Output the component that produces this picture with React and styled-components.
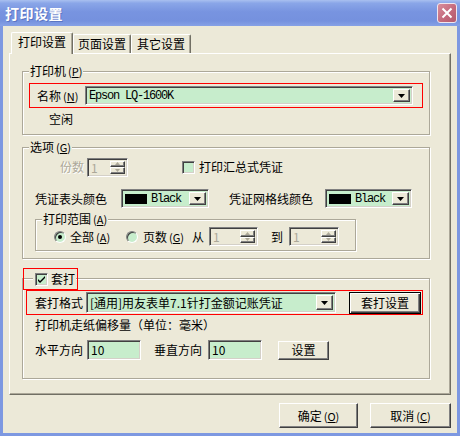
import React from "react";
import styled, { createGlobalStyle } from "styled-components";

const GlobalStyle = createGlobalStyle`
  html, body { margin: 0; padding: 0; background: #ece9d8; }
  body {
    font-family: "Noto Sans CJK SC", "Liberation Sans", sans-serif;
    font-size: 12px;
    color: #000;
  }
`;

const Window = styled.div`
  width: 460px;
  height: 436px;
  box-sizing: border-box;
  display: flex;
  flex-direction: column;
  background: #7d98e1;
`;

const TitleBar = styled.div`
  height: 26px;
  flex: none;
  display: flex;
  align-items: center;
  justify-content: space-between;
  padding: 0 3px 0 5px;
  background: linear-gradient(#a9c0f0 0%, #8aa6e8 12%, #7894e0 45%, #7591de 80%, #86a1e6 100%);
  color: #fff;
  font-weight: bold;
  font-size: 14px;
  letter-spacing: 0.5px;
  text-shadow: 1px 1px 0 rgba(40, 60, 140, 0.35);
`;

const CloseButton = styled.div`
  width: 20px;
  height: 20px;
  box-sizing: border-box;
  border: 1px solid #f0e6ee;
  border-radius: 3px;
  background: linear-gradient(135deg, #d98e9c, #c2677a 60%, #b45a6e);
  display: flex;
  align-items: center;
  justify-content: center;
`;

const Client = styled.div`
  flex: 1;
  margin: 0 3px 3px;
  background: #ece9d8;
  padding: 6px 6px 0;
  display: flex;
  flex-direction: column;
`;

const TabRow = styled.div`
  display: flex;
  align-items: flex-end;
  height: 21px;
  padding-left: 2px;
  position: relative;
  z-index: 1;
`;

const Tab = styled.div`
  box-sizing: border-box;
  width: ${p => p.$w}px;
  height: ${p => (p.$active ? 22 : 19)}px;
  margin-bottom: ${p => (p.$active ? -1 : 0)}px;
  background: #ece9d8;
  border-left: 1px solid #fff;
  border-top: 1px solid #fff;
  border-right: 1px solid #716f64;
  box-shadow: inset -1px 0 0 #aca899;
  border-radius: 2px 2px 0 0;
  display: flex;
  align-items: center;
  justify-content: center;
  line-height: 14px;
  padding-bottom: ${p => (p.$active ? 3 : 0)}px;
`;

const Panel = styled.div`
  box-sizing: border-box;
  height: 342px;
  border: 1px solid;
  border-color: #fff #716f64 #716f64 #fff;
  box-shadow: inset -1px -1px 0 #aca899;
  padding-left: 12px;
  display: flex;
  flex-direction: column;
`;

const Group = styled.div`
  position: relative;
  box-sizing: border-box;
  width: ${p => p.$w || 408}px;
  height: ${p => p.$h}px;
  margin-top: ${p => p.$mt}px;
  margin-left: ${p => p.$ml || 0}px;
  border: 1px solid #aca899;
  box-shadow: inset 1px 1px 0 #fff, 1px 1px 0 #fff;
  display: flex;
  flex-direction: column;
  flex: none;
`;

const Legend = styled.div`
  position: absolute;
  top: -8px;
  left: 6px;
  padding: 0 1px;
  background: #ece9d8;
  line-height: 14px;
  white-space: nowrap;
`;

const CheckLegend = styled.div`
  position: absolute;
  top: -11px;
  left: 0;
  box-sizing: border-box;
  width: 55px;
  height: 22px;
  border: 1px solid #f00;
  display: flex;
  align-items: center;
`;

const LegendFill = styled.div`
  margin-left: 9px;
  padding: 0 1px 0 2px;
  background: #ece9d8;
  display: flex;
  align-items: center;
  gap: 3px;
  line-height: 14px;
`;

const Row = styled.div`
  display: flex;
  align-items: center;
  height: ${p => p.$h}px;
  margin-top: ${p => p.$mt}px;
  flex: none;
`;

const RedBox = styled.div`
  box-sizing: border-box;
  width: ${p => p.$w}px;
  height: 25px;
  margin-top: ${p => p.$mt}px;
  margin-left: ${p => p.$ml}px;
  border: 1px solid #f00;
  display: flex;
  align-items: center;
  padding-left: ${p => p.$pl}px;
  flex: none;
`;

const Text = styled.span`
  display: inline-block;
  flex: none;
  width: ${p => (p.$w ? `${p.$w}px` : "auto")};
  margin-left: ${p => p.$ml || 0}px;
  line-height: 14px;
  white-space: nowrap;
  color: ${p => (p.$disabled ? "#aca899" : "#000")};
  text-shadow: ${p => (p.$disabled ? "1px 1px 0 #fff" : "none")};
`;

const Mn = styled.span`
  margin-left: 2px;
  font-size: 11px;
  & u { text-decoration-thickness: 1px; text-underline-offset: 1px; }
`;

const Sunken = styled.div`
  box-sizing: border-box;
  width: ${p => p.$w}px;
  height: ${p => p.$h}px;
  margin-left: ${p => p.$ml || 0}px;
  flex: none;
  background: ${p => (p.$disabled ? "#ece9d8" : "#c7edcc")};
  border: 1px solid;
  border-color: #808080 #fff #fff #808080;
  box-shadow: inset 1px 1px 0 #404040, inset -1px -1px 0 #d4d0c8;
  display: flex;
  align-items: center;
  padding: ${p => (p.$pad ? "2px 2px 2px 3px" : "0 2px 0 3px")};
  line-height: 14px;
  white-space: nowrap;
  color: ${p => (p.$disabled ? "#aca899" : "#000")};
`;

const MonoText = styled.span`
  flex: 1;
  font-family: "Liberation Mono", "Noto Sans CJK SC", monospace;
  font-size: 12px;
  letter-spacing: -1.2px;
`;

const ComboText = styled.span`
  flex: 1;
  line-height: 13px;
`;

const Raised = styled.span`
  box-sizing: border-box;
  background: #ece9d8;
  border: 1px solid;
  border-color: #fff #404040 #404040 #fff;
  box-shadow: inset -1px -1px 0 #808080;
  display: flex;
  align-items: center;
  justify-content: center;
`;

const DropButton = styled(Raised)`
  width: 17px;
  height: 100%;
  flex: none;
`;

const SpinCol = styled.div`
  margin-left: auto;
  width: 15px;
  height: 100%;
  display: flex;
  flex-direction: column;
  flex: none;
`;

const SpinHalf = styled(Raised)`
  flex: 1;
`;

const Swatch = styled.span`
  width: 22px;
  height: 10px;
  background: #000;
  margin-right: 4px;
  flex: none;
`;

const Box = styled.span`
  box-sizing: border-box;
  width: 13px;
  height: 13px;
  flex: none;
  margin-left: ${p => p.$ml || 0}px;
  background: #c7edcc;
  border: 1px solid;
  border-color: #808080 #fff #fff #808080;
  box-shadow: inset 1px 1px 0 #404040, inset -1px -1px 0 #d4d0c8;
  display: flex;
  align-items: center;
  justify-content: center;
`;

const Radio = styled.span`
  box-sizing: border-box;
  width: 12px;
  height: 12px;
  flex: none;
  margin-left: ${p => p.$ml || 0}px;
  border-radius: 50%;
  background: #c7edcc;
  border: 1px solid;
  border-color: #808080 #fff #fff #808080;
  box-shadow: inset 1px 1px 0 #404040;
  display: flex;
  align-items: center;
  justify-content: center;
  &::after {
    content: "";
    display: ${p => (p.$checked ? "block" : "none")};
    width: 4px;
    height: 4px;
    border-radius: 50%;
    background: #000;
  }
`;

const Button = styled.button`
  box-sizing: border-box;
  width: ${p => p.$w}px;
  height: ${p => p.$h}px;
  margin-left: ${p => p.$ml || 0}px;
  flex: none;
  padding: 0;
  font: inherit;
  line-height: 14px;
  color: #000;
  background: #ece9d8;
  border: 1px solid;
  border-color: ${p => (p.$default ? "#000" : "#fff #404040 #404040 #fff")};
  box-shadow: ${p =>
    p.$default
      ? "inset 1px 1px 0 #fff, inset -1px -1px 0 #404040, inset -2px -2px 0 #808080"
      : "inset -1px -1px 0 #808080"};
  display: flex;
  align-items: center;
  justify-content: center;
`;

const ButtonRow = styled.div`
  display: flex;
  justify-content: flex-end;
  gap: 12px;
  margin-top: 8px;
`;

const Arrow = () => (
  <svg width="7" height="4" viewBox="0 0 7 4">
    <path d="M0 0h7L3.5 4z" fill="#000" />
  </svg>
);

const SpinArrow = ({ up }) => (
  <svg width="5" height="3" viewBox="0 0 5 3">
    <path d={up ? "M2.5 0L5 3H0z" : "M0 0h5L2.5 3z"} fill="#aca899" />
  </svg>
);

function Combo({ w, h, children, ml }) {
  return (
    <Sunken $w={w} $h={h} $ml={ml} $pad>
      {children}
      <DropButton>
        <Arrow />
      </DropButton>
    </Sunken>
  );
}

function Spin({ w, ml }) {
  return (
    <Sunken $w={w} $h={19} $ml={ml} $disabled $pad>
      <ComboText>1</ComboText>
      <SpinCol>
        <SpinHalf><SpinArrow up /></SpinHalf>
        <SpinHalf><SpinArrow /></SpinHalf>
      </SpinCol>
    </Sunken>
  );
}

function ColorCombo({ w, ml }) {
  return (
    <Combo w={w} h={19} ml={ml}>
      <Swatch />
      <MonoText>Black</MonoText>
    </Combo>
  );
}

const Key = ({ k }) => (
  <Mn>
    (<u>{k}</u>)
  </Mn>
);

const Check = () => (
  <svg width="7" height="7" viewBox="0 0 7 7">
    <path d="M0 3l2 2 5-5v2L2 7 0 5z" fill="#000" />
  </svg>
);

export default function App() {
  return (
    <>
      <GlobalStyle />
      <Window>
        <TitleBar>
          <span>打印设置</span>
          <CloseButton>
            <svg width="12" height="12" viewBox="0 0 12 12">
              <path d="M1.5 1.5l9 9M10.5 1.5l-9 9" stroke="#fff" strokeWidth="2" />
            </svg>
          </CloseButton>
        </TitleBar>
        <Client>
          <TabRow>
            <Tab $w={62} $active>打印设置</Tab>
            <Tab $w={58}>页面设置</Tab>
            <Tab $w={60}>其它设置</Tab>
          </TabRow>
          <Panel>
            <Group $h={64} $mt={17}>
              <Legend>打印机<Key k="P" /></Legend>
              <RedBox $w={394} $mt={11} $ml={6} $pl={7}>
                <Text $w={48}>名称<Key k="N" /></Text>
                <Combo w={328} h={19}>
                  <MonoText>Epson LQ-1600K</MonoText>
                </Combo>
              </RedBox>
              <Row $h={14} $mt={4}>
                <Text $ml={26}>空闲</Text>
              </Row>
            </Group>

            <Group $h={112} $mt={12}>
              <Legend>选项<Key k="G" /></Legend>
              <Row $h={20} $mt={9}>
                <Text $ml={37} $w={27} $disabled>份数</Text>
                <Spin w={41} />
                <Box $ml={54} />
                <Text $ml={4}>打印汇总式凭证</Text>
              </Row>
              <Row $h={19} $mt={12}>
                <Text $ml={12} $w={86}>凭证表头颜色</Text>
                <ColorCombo w={88} />
                <Text $ml={20} $w={96}>凭证网格线颜色</Text>
                <ColorCombo w={87} />
              </Row>
              <Group $w={321} $h={32} $mt={11} $ml={12}>
                <Legend>打印范围<Key k="A" /></Legend>
                <Row $h={19} $mt={7}>
                  <Radio $ml={18} $checked />
                  <Text $ml={4} $w={42}>全部<Key k="A" /></Text>
                  <Radio $ml={14} />
                  <Text $ml={5} $w={42}>页数<Key k="G" /></Text>
                  <Text $ml={7} $w={12}>从</Text>
                  <Spin w={49} ml={5} />
                  <Text $ml={13} $w={12}>到</Text>
                  <Spin w={50} ml={6} />
                </Row>
              </Group>
            </Group>

            <Group $h={101} $mt={19}>
              <CheckLegend>
                <LegendFill>
                  <Box><Check /></Box>
                  <span>套打</span>
                </LegendFill>
              </CheckLegend>
              <RedBox $w={397} $mt={11} $ml={3} $pl={8}>
                <Text $w={51}>套打格式</Text>
                <Combo w={250} h={21}>
                  <ComboText>[通用]用友表单7.1针打金额记账凭证</ComboText>
                </Combo>
                <Button $w={72} $h={22} $ml={13} $default>套打设置</Button>
              </RedBox>
              <Row $h={14} $mt={3}>
                <Text $ml={12}>打印机走纸偏移量（单位：毫米）</Text>
              </Row>
              <Row $h={20} $mt={8}>
                <Text $ml={12} $w={52}>水平方向</Text>
                <Sunken $w={54} $h={20}>10</Sunken>
                <Text $ml={13} $w={54}>垂直方向</Text>
                <Sunken $w={54} $h={20}>10</Sunken>
                <Button $w={51} $h={19} $ml={16}>设置</Button>
              </Row>
            </Group>
          </Panel>
          <ButtonRow>
            <Button $w={79} $h={25}>确定<Key k="O" /></Button>
            <Button $w={81} $h={25}>取消<Key k="C" /></Button>
          </ButtonRow>
        </Client>
      </Window>
    </>
  );
}
